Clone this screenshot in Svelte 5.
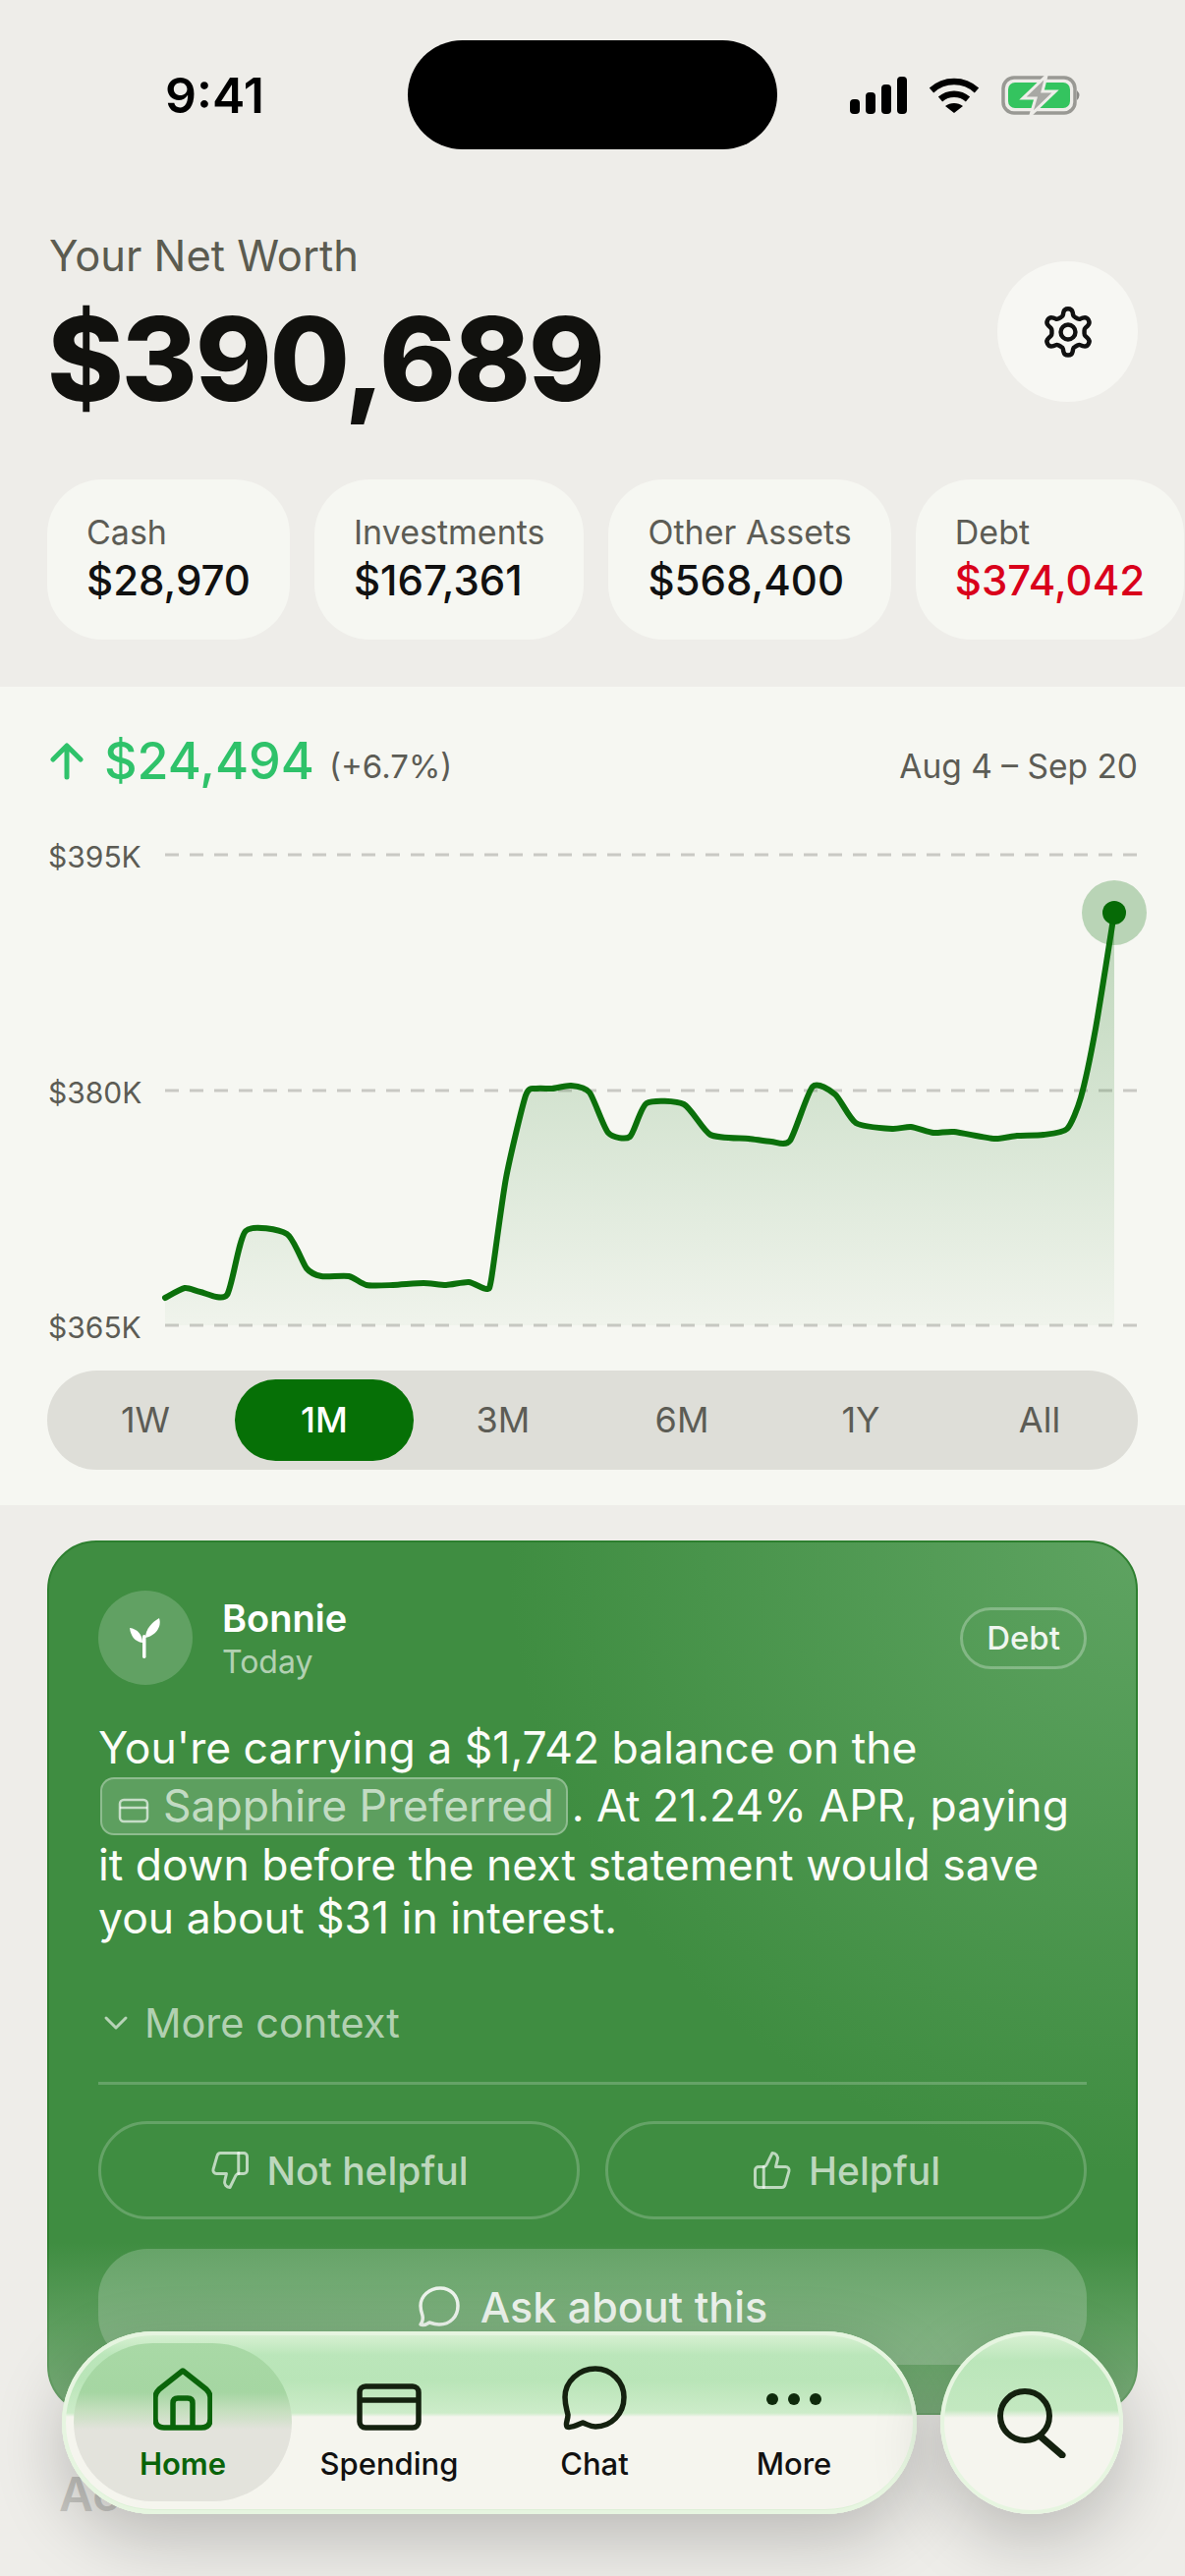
<script>
  const chips = [
    { label: "Cash", value: "$28,970" },
    { label: "Investments", value: "$167,361" },
    { label: "Other Assets", value: "$568,400" },
    { label: "Debt", value: "$374,042", debt: true },
  ];
  const ranges = ["1W", "1M", "3M", "6M", "1Y", "All"];
  const gridLines = [
    { y: 870, label: "$395K" },
    { y: 1110, label: "$380K" },
    { y: 1349, label: "$365K" },
  ];

  // traced from the screenshot, real pixels
  const pts = [
    [168,1321],[188,1311],[204,1315],[231,1318],[250,1253],[292,1256],[312,1291],[327,1299],[355,1299],
    [373,1308],[400,1308],[431,1306],[454,1308],[477,1305],[495,1312],[500,1302],[515,1199],[535,1115],
    [546,1108],[562,1108],[581,1105],[600,1112],[619,1153],[641,1157],[658,1123],[696,1124],[723,1155],
    [762,1159],[785,1162],[804,1161],[827,1106],[850,1114],[871,1143],[908,1149],[927,1147],[950,1153],
    [971,1152],[1012,1159],[1035,1156],[1062,1155],[1086,1149],[1100,1117],[1115,1047],[1134,929],
  ];

  function smooth(points) {
    let d = `M${points[0][0]} ${points[0][1]}`;
    for (let i = 0; i < points.length - 1; i++) {
      const p0 = points[Math.max(i - 1, 0)];
      const p1 = points[i];
      const p2 = points[i + 1];
      const p3 = points[Math.min(i + 2, points.length - 1)];
      const c1x = p1[0] + (p2[0] - p0[0]) / 9;
      const c1y = p1[1] + (p2[1] - p0[1]) / 9;
      const c2x = p2[0] - (p3[0] - p1[0]) / 9;
      const c2y = p2[1] - (p3[1] - p1[1]) / 9;
      d += ` C${c1x.toFixed(1)} ${c1y.toFixed(1)} ${c2x.toFixed(1)} ${c2y.toFixed(1)} ${p2[0]} ${p2[1]}`;
    }
    return d;
  }

  const line = smooth(pts);
  const area = `${line} L1134 1349 L168 1349 Z`;
</script>

<div class="screen">
  <div class="status">
    <div class="time">9:41</div>
    <div class="island"></div>
    <div class="status-icons">
      <svg width="58" height="38" viewBox="0 0 58 38" fill="#000">
        <rect x="0" y="23" width="10" height="15" rx="4" />
        <rect x="16" y="16" width="10" height="22" rx="4" />
        <rect x="32" y="8" width="10" height="30" rx="4" />
        <rect x="48" y="0" width="10" height="38" rx="4" />
      </svg>
      <svg width="52" height="38" viewBox="0 0 52 38" fill="none" stroke="#000" stroke-width="6.5">
        <path d="M3 14 C16 2 36 2 49 14" />
        <path d="M12 23 C20 16 32 16 40 23" />
        <path d="M26 37 L17 30 C22 26 30 26 35 30 Z" fill="#000" stroke="none" />
      </svg>
      <svg class="battery" width="82" height="40" viewBox="0 0 82 40">
        <rect x="2" y="2" width="73" height="36" rx="11" fill="none" stroke="#999994" stroke-width="3.5" />
        <rect x="7" y="7" width="63" height="26" rx="7" fill="#34c45f" />
        <path d="M77 15 Q82 20 77 25 Z" fill="#8a8a86" />
        <path d="M46 0 L22 23 L35 23 L30 40 L55 16 L42 16 Z" fill="#a8a8a4" stroke="#eeede9" stroke-width="3" />
      </svg>
    </div>
  </div>

  <header class="head">
    <div>
      <div class="head-label">Your Net Worth</div>
      <div class="head-value">$390,689</div>
    </div>
    <button class="gear" aria-label="Settings">
      <svg width="56" height="56" viewBox="0 0 24 24" fill="none" stroke="#111" stroke-width="1.9" stroke-linejoin="round">
        <path d="M12 1.8c1 0 1.8.6 2 1.6l.2 1.1c.1.5.4.8.8 1l1.1.6c.4.2.9.3 1.300.1l1-.4c1-.3 2 0 2.500.9.5.9.3 2-.4 2.600l-.9.8c-.3.3-.5.7-.5 1.200v1.300c0 .5.2.9.5 1.200l.9.8c.7.6.9 1.700.4 2.600-.5.9-1.500 1.200-2.500.9l-1-.4c-.4-.2-.9-.1-1.300.1l-1.100.6c-.4.2-.7.500-.8 1l-.2 1.100c-.2 1-1 1.600-2 1.600s-1.800-.6-2-1.600l-.2-1.100c-.1-.5-.4-.8-.8-1l-1.100-.6c-.4-.2-.9-.3-1.300-.1l-1 .4c-1 .3-2 0-2.500-.9-.5-.9-.3-2 .4-2.600l.9-.8c.3-.3.5-.7.5-1.200v-1.300c0-.5-.2-.9-.5-1.200l-.9-.8c-.7-.6-.9-1.700-.4-2.600.5-.9 1.500-1.200 2.500-.9l1 .4c.4.2.9.100 1.300-.1l1.100-.6c.4-.2.700-.5.800-1l.2-1.100c.2-1 1-1.600 2-1.600z" />
        <circle cx="12" cy="12" r="3.200" />
      </svg>
    </button>
  </header>

  <div class="chips">
    {#each chips as chip}
      <div class="chip">
        <div class="chip-label">{chip.label}</div>
        <div class="chip-value" class:debt={chip.debt}>{chip.value}</div>
      </div>
    {/each}
  </div>

  <section class="chart-card">
    <div class="delta-row">
      <div class="delta">
        <svg width="36" height="38" viewBox="0 0 36 38" fill="none" stroke="#2fc26a" stroke-width="5" stroke-linecap="round" stroke-linejoin="round">
          <path d="M18 35 V4 M4 17 L18 3 L32 17" />
        </svg>
        <span class="delta-value">$24,494</span>
        <span class="delta-pct">(+6.7%)</span>
      </div>
      <div class="dates">Aug 4 – Sep 20</div>
    </div>

    <svg class="chart" width="1206" height="520" viewBox="0 850 1206 520">
      <defs>
        <linearGradient id="fill" x1="0" y1="929" x2="0" y2="1349" gradientUnits="userSpaceOnUse">
          <stop offset="0" stop-color="#1d7a1d" stop-opacity="0.26" />
          <stop offset="1" stop-color="#1d7a1d" stop-opacity="0.03" />
        </linearGradient>
      </defs>
      {#each gridLines as g}
        <line x1="168" x2="1158" y1={g.y} y2={g.y} stroke="#c9c9c4" stroke-width="3" stroke-dasharray="14 11" />
        <text x="49" y={g.y + 13} class="axis">{g.label}</text>
      {/each}
      <path d={area} fill="url(#fill)" />
      <path d={line} fill="none" stroke="#0b700b" stroke-width="6" stroke-linejoin="round" stroke-linecap="round" />
      <circle cx="1134" cy="929" r="33" fill="#0b700b" fill-opacity="0.26" />
      <circle cx="1134" cy="929" r="12" fill="#066a06" />
    </svg>

    <div class="ranges">
      {#each ranges as r}
        <div class="range" class:active={r === "1M"}>{r}</div>
      {/each}
    </div>
  </section>

  <section class="insight">
    <div class="insight-head">
      <div class="avatar">
        <svg width="34" height="42" viewBox="0 0 34 42" fill="#fff">
          <path d="M14 26 C6 25 2 19 1 11 C9 12 14 18 14 26Z" />
          <path d="M17 21 C17 12 24 5 31 1 C34 10 27 19 17 21Z" />
          <rect x="14" y="18" width="3.500" height="24" rx="1.700" />
        </svg>
      </div>
      <div class="who">
        <div class="name">Bonnie</div>
        <div class="when">Today</div>
      </div>
      <div class="tag">Debt</div>
    </div>

    <p class="message">
      You're carrying a $1,742 balance on the <span class="card-ref"><svg width="32" height="26" viewBox="0 0 32 26" fill="none" stroke="currentColor" stroke-width="2.500"><rect x="2" y="2" width="28" height="22" rx="4" /><path d="M2 10 H30" /></svg>Sapphire Preferred</span>. At 21.24% APR, paying it down before the next statement would save you about $31 in interest.
    </p>

    <div class="more">
      <svg width="26" height="16" viewBox="0 0 26 16" fill="none" stroke="currentColor" stroke-width="3" stroke-linecap="round" stroke-linejoin="round">
        <path d="M3 3 L13 13 L23 3" />
      </svg>
      More context
    </div>

    <div class="divider"></div>

    <div class="feedback">
      <button class="fb">
        <svg width="42" height="44" viewBox="0 0 24 24" fill="none" stroke="currentColor" stroke-width="1.700" stroke-linecap="round" stroke-linejoin="round">
          <path d="M17 14V2" />
          <path d="M9 18.100 10 14H4.200a2 2 0 0 1-1.900-2.500l2.300-8A2 2 0 0 1 6.500 2H20a2 2 0 0 1 2 2v8a2 2 0 0 1-2 2h-2.800a2 2 0 0 0-1.800 1.100L12 22a3 3 0 0 1-3-3.900z" />
        </svg>
        Not helpful
      </button>
      <button class="fb">
        <svg width="42" height="44" viewBox="0 0 24 24" fill="none" stroke="currentColor" stroke-width="1.700" stroke-linecap="round" stroke-linejoin="round">
          <path d="M7 10v12" />
          <path d="M15 5.900 14 10h5.800a2 2 0 0 1 1.900 2.500l-2.300 8A2 2 0 0 1 17.500 22H4a2 2 0 0 1-2-2v-8a2 2 0 0 1 2-2h2.800a2 2 0 0 0 1.800-1.100L12 2a3 3 0 0 1 3 3.900z" />
        </svg>
        Helpful
      </button>
    </div>

    <button class="ask">
      <svg width="44" height="44" viewBox="0 0 44 44" fill="none" stroke="currentColor" stroke-width="3.500" stroke-linejoin="round">
        <path d="M23 3 C34 3 41 11 41 21 C41 32 33 40 22 40 C18 40 15 39 12 38 C9 40 5 41 3 40 C5 37 6 35 5 31 C4 28 3 25 3 21 C3 11 12 3 23 3Z" />
      </svg>
      Ask about this
    </button>
  </section>

  <h2 class="accounts">Accounts</h2>

  <div class="fade"></div>

  <nav class="tabbar">
    <div class="tabs">
      <div class="tab active">
        <svg width="60" height="64" viewBox="0 0 60 64" fill="none" stroke="#0a640a" stroke-width="5.500" stroke-linejoin="round">
          <path d="M30 3 L54 22 Q58 26 58 30 V52 Q58 61 49 61 H11 Q2 61 2 52 V30 Q2 26 6 22 Z" />
          <path d="M20 61 V36 Q20 31 25 31 H35 Q40 31 40 36 V61" />
        </svg>
        <span>Home</span>
      </div>
      <div class="tab">
        <svg width="66" height="48" viewBox="0 0 66 48" fill="none" stroke="#14210f" stroke-width="5.500">
          <rect x="3" y="3" width="60" height="42" rx="6" />
          <path d="M3 17 H63" />
        </svg>
        <span>Spending</span>
      </div>
      <div class="tab">
        <svg width="66" height="66" viewBox="0 0 66 66" fill="none" stroke="#14210f" stroke-width="5.500" stroke-linejoin="round">
          <path d="M34 3 C50 3 63 16 63 32 C63 49 50 62 34 62 C28 62 25 59 21 58 C16 60 9 64 5 62 C3 60 6 55 6 50 C5 45 3 40 3 32 C3 16 17 3 34 3Z" />
        </svg>
        <span>Chat</span>
      </div>
      <div class="tab">
        <svg width="56" height="64" viewBox="0 0 56 64" fill="#0f2a0c">
          <circle cx="6" cy="32" r="6" /><circle cx="28" cy="32" r="6" /><circle cx="50" cy="32" r="6" />
        </svg>
        <span>More</span>
      </div>
    </div>
    <button class="search" aria-label="Search">
      <svg width="72" height="72" viewBox="0 0 72 72" fill="none" stroke="#14210f" stroke-width="6" stroke-linecap="round">
        <circle cx="29" cy="29" r="25" />
        <path d="M45 50 L67 69" stroke-width="7" />
      </svg>
    </button>
  </nav>
</div>

<style>
  :global(body) {
    margin: 0;
    background: #eeede9;
  }

  .screen {
    position: relative;
    width: 1206px;
    height: 2622px;
    overflow: hidden;
    background: #eeede9;
    font-family: Inter, "Liberation Sans", sans-serif;
    color: #111;
  }

  button {
    font-family: inherit;
    border: none;
    background: none;
    padding: 0;
  }

  .status {
    display: grid;
    grid-template-columns: 415px 376px 1fr;
    padding-top: 41px;
    height: 111px;
  }

  .time {
    font-size: 50px;
    font-weight: 600;
    text-align: center;
    padding: 26px 0 0 22px;
    line-height: 60px;
    color: #000;
  }

  .island {
    height: 111px;
    background: #000;
    border-radius: 56px;
  }

  .status-icons {
    display: flex;
    align-items: center;
    gap: 22px;
    padding-left: 74px;
  }

  .head {
    display: flex;
    justify-content: space-between;
    align-items: flex-start;
    padding: 81px 48px 0 50px;
  }

  .head-label {
    font-size: 43.5px;
    line-height: 54px;
    color: #5b5b50;
  }

  .head-value {
    margin: 8px 0 0 -2px;
    font-size: 118px;
    line-height: 140px;
    font-weight: 800;
    letter-spacing: -2.3px;
    color: #11110e;
  }

  .gear {
    width: 143px;
    height: 143px;
    margin-top: 33px;
    border-radius: 50%;
    background: #f7f7f3;
    display: flex;
    align-items: center;
    justify-content: center;
  }

  .chips {
    display: flex;
    gap: 25px;
    padding: 53px 0 0 48px;
    width: max-content;
  }

  .chip {
    height: 163px;
    box-sizing: border-box;
    padding: 33px 40px 0;
    border-radius: 56px;
    background: #f6f7f2;
  }

  .chip-label {
    font-size: 34px;
    line-height: 42px;
    color: #5c5c55;
  }

  .chip-value {
    margin-top: 3px;
    font-size: 42px;
    line-height: 50px;
    font-weight: 500;
    color: #111;
  }

  .chip-value.debt {
    color: #d9001b;
  }

  .chart-card {
    margin-top: 48px;
    height: 833px;
    background: #f6f7f2;
  }

  .delta-row {
    display: flex;
    justify-content: space-between;
    align-items: center;
    height: 151px;
    box-sizing: border-box;
    padding: 0 48px 0 50px;
  }

  .delta {
    display: flex;
    align-items: center;
  }

  .delta-value {
    margin-left: 20px;
    font-size: 52px;
    font-weight: 500;
    color: #2fc26a;
  }

  .delta-pct {
    margin-left: 15px;
    padding-top: 10px;
    font-size: 33px;
    color: #5c5c55;
  }

  .dates {
    padding-top: 10px;
    font-size: 33.5px;
    color: #5c5c55;
  }

  .chart {
    display: block;
  }

  .axis {
    font-size: 30px;
    fill: #5c5c55;
  }

  .ranges {
    display: grid;
    grid-template-columns: repeat(6, 182px);
    margin: 25px 48px 0;
    padding: 9px;
    height: 101px;
    box-sizing: border-box;
    border-radius: 51px;
    background: #deded8;
  }

  .range {
    height: 83px;
    line-height: 83px;
    text-align: center;
    border-radius: 42px;
    font-size: 36px;
    color: #5c5c55;
  }

  .range.active {
    background: #067006;
    color: #fff;
    font-weight: 500;
  }

  .insight {
    margin: 36px 48px 0;
    height: 890px;
    box-sizing: border-box;
    padding: 49px 50px 0;
    border: 2px solid #2d7f2f;
    border-radius: 50px;
    background: radial-gradient(circle at 100% 0, #5ea361 0, rgba(94, 163, 97, 0) 640px), #3f8d41;
    color: #fff;
  }

  .insight-head {
    display: flex;
    align-items: center;
  }

  .avatar {
    flex: none;
    width: 96px;
    height: 96px;
    border-radius: 50%;
    background: rgba(255, 255, 255, 0.18);
    display: flex;
    align-items: center;
    justify-content: center;
  }

  .who {
    margin-left: 30px;
    flex: 1;
  }

  .name {
    font-size: 38px;
    line-height: 50px;
    font-weight: 600;
  }

  .when {
    font-size: 32px;
    line-height: 40px;
    color: rgba(255, 255, 255, 0.62);
  }

  .tag {
    height: 63px;
    line-height: 57px;
    box-sizing: border-box;
    padding: 0 24px;
    border: 3px solid rgba(255, 255, 255, 0.28);
    border-radius: 32px;
    font-size: 33px;
    font-weight: 500;
    color: rgba(255, 255, 255, 0.92);
  }

  .message {
    margin: 37px 0 0;
    font-size: 44.5px;
    line-height: 54px;
    color: #fbfdf8;
  }

  .card-ref {
    display: inline-block;
    height: 59px;
    margin: 3px 4px 3px 2px;
    padding: 0 12px 0 16px;
    box-sizing: border-box;
    line-height: 55px;
    border: 2px solid rgba(255, 255, 255, 0.3);
    border-radius: 14px;
    background: rgba(255, 255, 255, 0.16);
    color: rgba(255, 255, 255, 0.65);
  }

  .card-ref svg {
    margin-right: 14px;
    vertical-align: -2px;
  }

  .more {
    display: flex;
    align-items: center;
    gap: 16px;
    margin-top: 55px;
    padding-left: 5px;
    font-size: 41.5px;
    line-height: 50px;
    color: rgba(255, 255, 255, 0.62);
  }

  .divider {
    margin-top: 35px;
    height: 3px;
    background: rgba(255, 255, 255, 0.2);
  }

  .feedback {
    display: grid;
    grid-template-columns: 1fr 1fr;
    gap: 26px;
    margin-top: 37px;
  }

  .fb {
    height: 100px;
    display: flex;
    align-items: center;
    justify-content: center;
    gap: 16px;
    box-sizing: border-box;
    border: 3px solid rgba(255, 255, 255, 0.2);
    border-radius: 50px;
    font-size: 39px;
    font-weight: 500;
    color: rgba(255, 255, 255, 0.66);
  }

  .ask {
    width: 100%;
    height: 118px;
    margin-top: 30px;
    display: flex;
    align-items: center;
    justify-content: center;
    gap: 20px;
    border-radius: 50px;
    background: rgba(255, 255, 255, 0.2);
    font-size: 43px;
    font-weight: 500;
    color: rgba(255, 255, 255, 0.88);
  }

  .accounts {
    margin: 51px 0 0 60px;
    font-size: 48px;
    font-weight: 600;
    line-height: 60px;
    color: #9a9a95;
  }

  .fade {
    position: absolute;
    left: 0;
    right: 0;
    bottom: 0;
    height: 340px;
    background: linear-gradient(rgba(238, 237, 233, 0), rgba(238, 237, 233, 0.34) 50%, rgba(238, 237, 233, 0.68));
  }

  .tabbar {
    position: absolute;
    left: 63px;
    top: 2373px;
    display: flex;
    gap: 24px;
  }

  .tabs {
    width: 870px;
    height: 186px;
    box-sizing: border-box;
    padding: 12px 12px 13px;
    display: grid;
    grid-template-columns: 222px 198px 220px 186px;
    border-radius: 93px;
    background: linear-gradient(#dcf2d6 0, #bbe6ba 24px, #b9e5b8 50px, #cdecc9 83px, #f5f5ee 87px);
    box-shadow: inset 0 0 0 4px #e6f5e0, inset 0 -2px 0 3px #dcf0d6, 0 24px 70px rgba(0, 0, 0, 0.22);
  }

  .tab {
    display: flex;
    flex-direction: column;
    align-items: center;
    justify-content: flex-end;
    gap: 14px;
    padding-bottom: 18px;
    border-radius: 81px;
    font-size: 31px;
    line-height: 40px;
    font-weight: 500;
    color: #111;
  }

  .tab svg {
    display: block;
  }

  .tab.active {
    background: linear-gradient(#a9d9a6 0, #a5d6a2 50px, #c4dfbd 68px, #e3e3dc 88px);
    color: #0a640a;
    font-weight: 600;
  }

  .search {
    width: 186px;
    height: 186px;
    border-radius: 50%;
    background: linear-gradient(#dcf2d6 0, #bbe6ba 30px, #c3e8c0 80px, #f5f5ee 88px);
    box-shadow: inset 0 0 0 4px #e6f5e0, 0 24px 70px rgba(0, 0, 0, 0.22);
    display: flex;
    align-items: center;
    justify-content: center;
  }
</style>
